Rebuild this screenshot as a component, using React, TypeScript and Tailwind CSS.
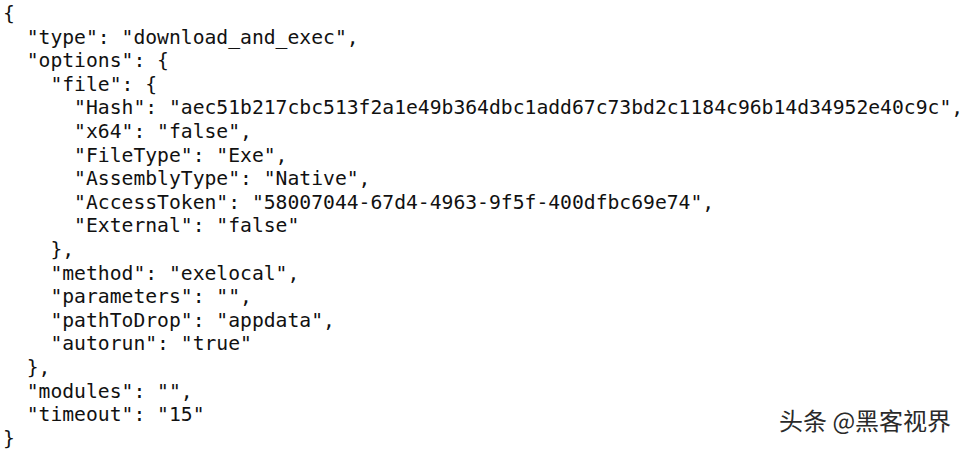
import React from 'react';

const lines = [
  '{',
  '  "type": "download_and_exec",',
  '  "options": {',
  '    "file": {',
  '      "Hash": "aec51b217cbc513f2a1e49b364dbc1add67c73bd2c1184c96b14d34952e40c9c",',
  '      "x64": "false",',
  '      "FileType": "Exe",',
  '      "AssemblyType": "Native",',
  '      "AccessToken": "58007044-67d4-4963-9f5f-400dfbc69e74",',
  '      "External": "false"',
  '    },',
  '    "method": "exelocal",',
  '    "parameters": "",',
  '    "pathToDrop": "appdata",',
  '    "autorun": "true"',
  '  },',
  '  "modules": "",',
  '  "timeout": "15"',
  '}',
];

export default function App() {
  return (
    <div className="relative w-[974px] h-[449px] overflow-hidden bg-white">
      <div className="flex flex-col items-start pl-[3px] pt-[2px] font-['DejaVu_Sans_Mono',monospace] text-[19.7px] leading-[23.6px] text-[#111]">
        {lines.map((l, i) => (
          <div key={i} className="whitespace-pre">
            {l}
          </div>
        ))}
      </div>
      {/* watermark */}
      <div className="absolute left-[779px] top-[403px] font-['Noto_Sans_CJK_SC',sans-serif] text-[24px] leading-[34px] text-[#2a2a2a] [text-shadow:1px_1px_1px_rgba(255,255,255,0.9)]">
        头条 @黑客视界
      </div>
    </div>
  );
}
